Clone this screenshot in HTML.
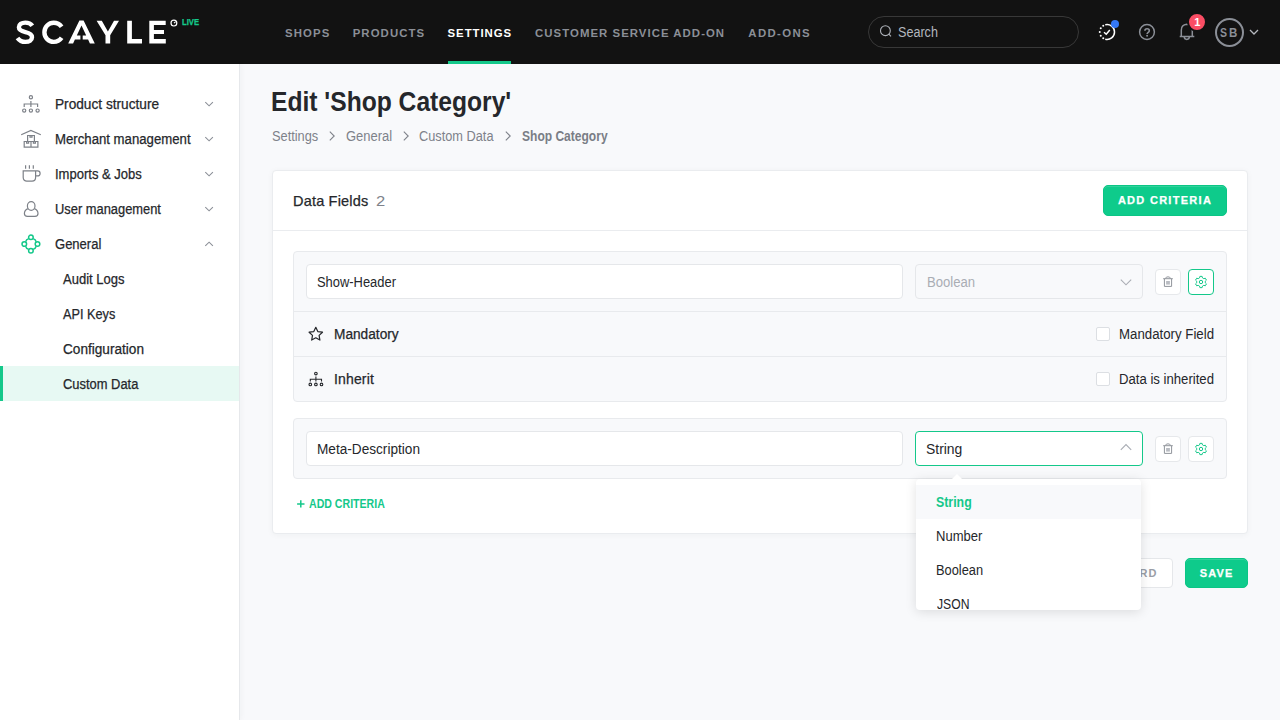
<!DOCTYPE html>
<html lang="en">
<head>
<meta charset="utf-8">
<title>Edit 'Shop Category'</title>
<style>
*{box-sizing:border-box;margin:0;padding:0}
html,body{width:1280px;height:720px;overflow:hidden}
body{font-family:"Liberation Sans",sans-serif;background:#f8f9fb;color:#25272b;position:relative}
.t{position:absolute;white-space:nowrap;z-index:5;transform-origin:0 0}
.t.m{-webkit-text-stroke:0.25px currentColor}
.t.z{z-index:30}
svg{position:absolute;overflow:visible}
#hdr{position:absolute;left:0;top:0;width:1280px;height:64px;background:#121212}
#navline{position:absolute;left:448px;top:61px;width:63px;height:3px;background:#14c88a}
#search{position:absolute;left:868px;top:16px;width:211px;height:32px;border:1px solid #383838;border-radius:16px}
#bdot{position:absolute;left:1111px;top:20px;width:8px;height:8px;border-radius:50%;background:#3478f6}
#badge{position:absolute;left:1187px;top:12px;width:20px;height:20px;border-radius:50%;background:#fa4d64;border:2px solid #121212}
#avatar{position:absolute;left:1215px;top:18px;width:29px;height:29px;border-radius:50%;border:2px solid #8b8f97}
#side{position:absolute;left:0;top:64px;width:240px;height:656px;background:#fff;border-right:1px solid #e6e8eb;box-shadow:1px 0 6px rgba(30,40,60,0.04)}
#act{position:absolute;left:0;top:366px;width:239px;height:35px;background:#e7f9f3;border-left:3px solid #14c88a}
#card{position:absolute;left:272px;top:170px;width:976px;height:364px;background:#fff;border:1px solid #eaecef;border-radius:4px;box-shadow:0 1px 6px rgba(30,40,60,0.04)}
#cardline{position:absolute;left:273px;top:230px;width:974px;height:1px;background:#eaecef}
.box{position:absolute;left:293px;width:934px;background:#f8f9fb;border:1px solid #e8eaed;border-radius:4px}
.hl{position:absolute;left:294px;width:932px;height:1px;background:#e8eaed}
.inp{position:absolute;background:#fff;border:1px solid #e5e7ea;border-radius:4px}
.ib{position:absolute;width:26px;height:26px;background:#fff;border:1px solid #e6e8eb;border-radius:4px}
.cb{position:absolute;left:1096px;width:14px;height:14px;background:#fff;border:1px solid #dcdfe3;border-radius:2px}
.btn{position:absolute;background:#0ecb8b;border:1px solid #0bc585;border-radius:5px;box-shadow:inset 0 1px 0 rgba(255,255,255,0.14)}
#dd{position:absolute;left:916px;top:479px;width:225px;height:131px;background:#fff;border-radius:4px;box-shadow:0 2px 12px rgba(0,0,0,0.12);z-index:20;overflow:hidden}
#ddsel{position:absolute;left:0;top:6px;width:225px;height:34px;background:#f8f9fb}
#ddarrow{position:absolute;left:951px;top:474px;width:0;height:0;border-left:6px solid transparent;border-right:6px solid transparent;border-bottom:6px solid #fff;z-index:21}
</style>
</head>
<body>
<div id="hdr"></div>
<!-- logo -->
<svg width="200" height="64" style="left:0;top:0" viewBox="0 0 200 64">
  <g fill="none" stroke="#fff" stroke-width="4.4">
    <path d="M32.3 25.8C30.7 23.5 28.2 22.6 25.3 22.6C21.6 22.6 18.9 24.4 18.9 27.3C18.9 30.3 21.5 31.2 25.4 32.1C29.4 33 32 34.1 32 37.2C32 40.1 29.2 41.9 25.5 41.9C22 41.9 19.3 40.5 17.5 37.9"/>
    <path d="M61.6 26.8C59.8 24.2 57 22.7 53.7 22.7C48.6 22.7 44.4 26.8 44.4 32.3C44.4 37.800000000000004 48.6 41.9 53.7 41.9C57 41.9 59.8 40.4 61.6 37.8"/>
  </g>
  <g fill="#fff">
    <path d="M68.2 43.5L79.4 20.6H83.6L94.8 43.5H89.9L88.1 39.6H82.7V35.5H86.2L81.5 25.600000000000001L76.8 35.5H80.4V39.6H74.9L73.1 43.5Z"/>
    <path d="M96.6 20.8H101.8L107.9 31.4L114 20.8H119L110.2 35.2V43.4H105.5V35.2Z"/>
    <path d="M127.2 20.8H131.9V39.1H142V43.4H127.2Z"/>
    <path d="M149.3 20.8H165.7V25H153.9V30.1H164V34H153.9V39.1H165.8V43.4H149.3Z"/>
  </g>
  <circle cx="173.9" cy="23.1" r="2.9" fill="none" stroke="#fff" stroke-width="1.2"/>
  <path d="M174 23.2L175.6 21.6" stroke="#fff" stroke-width="1.1" fill="none"/>
</svg>
<div id="navline"></div>
<div id="search"></div>
<svg width="14" height="14" style="left:879px;top:24px" viewBox="0 0 14 14"><circle cx="6.4" cy="6.7" r="4.9" fill="none" stroke="#aeb2b9" stroke-width="1.1"/><path d="M9.9 10.2L12 12.4" stroke="#aeb2b9" stroke-width="1.1" fill="none"/></svg>
<!-- progress icon -->
<svg width="24" height="24" style="left:1095px;top:20px" viewBox="0 0 24 24">
  <path d="M10.25 4.71A7.5 7.5 0 1 1 10.25 19.29" fill="none" stroke="#fff" stroke-width="1.5"/>
  <g fill="#fff"><circle cx="8.25" cy="5.75" r="1"/><circle cx="5.75" cy="8.25" r="1"/><circle cx="4.75" cy="12" r="1"/><circle cx="5.75" cy="15.7" r="1"/><circle cx="8.25" cy="18.3" r="1"/></g>
  <path d="M9 12.25L11.25 14.2L14.8 10" fill="none" stroke="#fff" stroke-width="1.5"/>
</svg>
<div id="bdot"></div>
<!-- help -->
<svg width="20" height="20" style="left:1137px;top:22px" viewBox="0 0 20 20"><circle cx="10" cy="10" r="7.4" fill="none" stroke="#8b8f97" stroke-width="1.5"/><path d="M7.9 8.7C7.9 7.5 8.9 6.8 10.1 6.8C11.4 6.8 12.3 7.6 12.3 8.7C12.3 10.3 10.1 10.3 10.1 12.1" fill="none" stroke="#8b8f97" stroke-width="1.6"/><circle cx="10.1" cy="13.8" r="0.95" fill="#8b8f97"/></svg>
<!-- bell -->
<svg width="20" height="20" style="left:1177px;top:22px" viewBox="0 0 20 20">
  <path d="M2.7 14.5H17.3M4.3 14.5V8.2C4.3 4.6 6.6 2.6 9.7 2.3C12.8 2.6 15.3 4.6 15.3 8.2V14.5" fill="none" stroke="#8b8f97" stroke-width="1.5"/>
  <path d="M7.2 14.6A2.6 2.8 0 0 0 12.4 14.6" fill="none" stroke="#8b8f97" stroke-width="1.5"/>
</svg>
<div id="badge"></div>
<div id="avatar"></div>
<svg width="10" height="8" style="left:1249px;top:28px" viewBox="0 0 10 8"><path d="M1 2L5 6L9 2" fill="none" stroke="#b5b8be" stroke-width="1.3"/></svg>

<div id="side"></div>
<div id="act"></div>
<!-- sidebar icons -->
<svg width="20" height="20" style="left:21px;top:94px" viewBox="0 0 20 20" fill="none" stroke="#7d8188" stroke-width="1.2">
  <circle cx="9.9" cy="3.3" r="1.6"/><path d="M9.9 7V12.9M3.2 12.9V10H16.6V12.9"/>
  <circle cx="3.2" cy="16.6" r="1.6"/><circle cx="9.9" cy="16.6" r="1.6"/><circle cx="16.6" cy="16.6" r="1.6"/>
</svg>
<svg width="22" height="20" style="left:20px;top:129px" viewBox="0 0 22 20" fill="none" stroke="#7d8188" stroke-width="1.2">
  <path d="M1.2 5.8L10.9 1.4L20.8 5.8"/>
  <path d="M7.6 6.5H14.4V12.5H7.6ZM4.2 12.5H17.9V18.2H4.2ZM11 12.5V18.2M10 6.5V8.2H12V6.5M6.6 12.5V14.2H8.6V12.5M13.4 12.5V14.2H15.4V12.5"/>
</svg>
<svg width="20" height="20" style="left:21px;top:163px" viewBox="0 0 20 20" fill="none" stroke="#7d8188" stroke-width="1.2">
  <path d="M4.6 2.2V5.8M8.4 2.2V5.8M12.3 2.2V5.8"/>
  <path d="M2.2 7.9H14.6V14.6C14.6 16.8 13 18.2 11 18.2H5.8C3.8 18.2 2.2 16.8 2.2 14.6ZM14.6 7.9H16.6C18 7.9 19.1 9 19.1 10.4C19.1 11.8 18 12.9 16.6 12.9H14.6"/>
</svg>
<svg width="20" height="24" style="left:21px;top:197px" viewBox="0 0 20 24" fill="none" stroke="#7d8188" stroke-width="1.2">
  <ellipse cx="10.2" cy="9" rx="3.8" ry="4.3"/>
  <path d="M6.9 11.6C4.6 12.5 3.4 14.3 3.4 16.5C3.4 18.3 4.6 19.3 6.4 19.3H14C15.8 19.3 17 18.3 17 16.5C17 14.3 15.8 12.5 13.5 11.6"/>
</svg>
<svg width="20" height="20" style="left:21px;top:234px" viewBox="0 0 20 20" fill="none" stroke="#14c88a" stroke-width="1.5">
  <circle cx="9.9" cy="3.3" r="2.3"/><circle cx="9.9" cy="16.7" r="2.3"/><circle cx="3.3" cy="10" r="2.3"/><circle cx="16.5" cy="10" r="2.3"/>
  <path d="M7.7 4.6A4.6 4.6 0 0 0 4.6 7.8M12.1 4.6A4.6 4.6 0 0 1 15.2 7.8M4.6 12.2A4.6 4.6 0 0 0 7.7 15.4M15.2 12.2A4.6 4.6 0 0 1 12.1 15.4"/>
</svg>
<!-- sidebar chevrons -->
<svg width="10" height="8" style="left:204px;top:100px" viewBox="0 0 10 8"><path d="M1.3 2.2L5.1 5.8L8.9 2.2" fill="none" stroke="#8b8f97" stroke-width="1.1"/></svg>
<svg width="10" height="8" style="left:204px;top:135px" viewBox="0 0 10 8"><path d="M1.3 2.2L5.1 5.8L8.9 2.2" fill="none" stroke="#8b8f97" stroke-width="1.1"/></svg>
<svg width="10" height="8" style="left:204px;top:170px" viewBox="0 0 10 8"><path d="M1.3 2.2L5.1 5.8L8.9 2.2" fill="none" stroke="#8b8f97" stroke-width="1.1"/></svg>
<svg width="10" height="8" style="left:204px;top:205px" viewBox="0 0 10 8"><path d="M1.3 2.2L5.1 5.8L8.9 2.2" fill="none" stroke="#8b8f97" stroke-width="1.1"/></svg>
<svg width="10" height="8" style="left:204px;top:240px" viewBox="0 0 10 8"><path d="M1.3 5.8L5.1 2.2L8.9 5.8" fill="none" stroke="#8b8f97" stroke-width="1.1"/></svg>

<!-- breadcrumb chevrons -->
<svg width="8" height="12" style="left:328px;top:130px" viewBox="0 0 8 12"><path d="M1.8 1.6L6.2 6L1.8 10.4" fill="none" stroke="#7e828a" stroke-width="1.1"/></svg>
<svg width="8" height="12" style="left:402px;top:130px" viewBox="0 0 8 12"><path d="M1.8 1.6L6.2 6L1.8 10.4" fill="none" stroke="#7e828a" stroke-width="1.1"/></svg>
<svg width="8" height="12" style="left:504px;top:130px" viewBox="0 0 8 12"><path d="M1.8 1.6L6.2 6L1.8 10.4" fill="none" stroke="#7e828a" stroke-width="1.1"/></svg>

<div id="card"></div>
<div id="cardline"></div>
<div class="btn" style="left:1103px;top:185px;width:124px;height:31px"></div>

<!-- box 1 -->
<div class="box" style="top:251px;height:151px"></div>
<div class="hl" style="top:311px"></div>
<div class="hl" style="top:356px"></div>
<div class="inp" style="left:306px;top:264px;width:597px;height:35px"></div>
<div class="inp" style="left:915px;top:264px;width:228px;height:35px;background:#f8f9fb"></div>
<svg width="14" height="10" style="left:1119px;top:277px" viewBox="0 0 14 10"><path d="M1.8 2.6L7 7.8L12.2 2.6" fill="none" stroke="#a9adb4" stroke-width="1.1"/></svg>
<div class="ib" style="left:1155px;top:269px"></div>
<div class="ib" style="left:1188px;top:269px;border-color:#14c88a"></div>
<div class="cb" style="top:327px"></div>
<div class="cb" style="top:372px"></div>
<!-- star -->
<svg width="18" height="18" style="left:307px;top:325px" viewBox="0 0 18 18"><path d="M8.8 2.3L10.8 6.6L15.5 7.2L12.1 10.4L12.9 15.1L8.8 12.8L4.7 15.1L5.5 10.4L2.1 7.2L6.8 6.6Z" fill="none" stroke="#25272b" stroke-width="1.2" stroke-linejoin="round"/></svg>
<!-- inherit icon -->
<svg width="18" height="18" style="left:307px;top:370px" viewBox="0 0 18 18" fill="none" stroke="#25272b" stroke-width="1.1">
  <circle cx="8.9" cy="3.6" r="1.3"/><path d="M8.9 6.4V11.6M3.3 11.6V9.2H14.5V11.6"/>
  <circle cx="3.3" cy="14.4" r="1.3"/><circle cx="8.9" cy="14.4" r="1.3"/><circle cx="14.5" cy="14.4" r="1.3"/>
</svg>

<!-- box 2 -->
<div class="box" style="top:418px;height:61px"></div>
<div class="inp" style="left:306px;top:431px;width:597px;height:35px"></div>
<div class="inp" style="left:915px;top:431px;width:228px;height:35px;border-color:#14c88a"></div>
<svg width="14" height="10" style="left:1119px;top:442px" viewBox="0 0 14 10"><path d="M1.8 7.8L7 2.6L12.2 7.8" fill="none" stroke="#a9adb4" stroke-width="1.1"/></svg>
<div class="ib" style="left:1155px;top:436px"></div>
<div class="ib" style="left:1188px;top:436px"></div>

<!-- trash + gear icons -->
<svg width="12" height="12" style="left:1162px;top:276px" viewBox="0 0 12 12" id="tr1"><g fill="none" stroke="#90949b" stroke-width="1"><path d="M1.2 2.7H10.8M3.6 2.5C3.6 1.4 4.6 0.9 6 0.9C7.4 0.9 8.4 1.4 8.4 2.5M2.4 2.9V10.4H9.6V2.9"/></g><rect x="4.1" y="5" width="3.8" height="3.6" fill="#b9bcc2"/></svg>
<svg width="12" height="12" style="left:1162px;top:443px" viewBox="0 0 12 12"><g fill="none" stroke="#90949b" stroke-width="1"><path d="M1.2 2.7H10.8M3.6 2.5C3.6 1.4 4.6 0.9 6 0.9C7.4 0.9 8.4 1.4 8.4 2.5M2.4 2.9V10.4H9.6V2.9"/></g><rect x="4.1" y="5" width="3.8" height="3.6" fill="#b9bcc2"/></svg>
<svg width="14" height="14" style="left:1194px;top:275px" viewBox="-7 -7 14 14" class="gear"><path d="M1.49 -4.09L1.10 -5.64L-1.10 -5.64L-1.49 -4.09L-2.80 -3.33L-4.34 -3.77L-5.44 -1.87L-4.28 -0.76L-4.28 0.76L-5.44 1.87L-4.34 3.77L-2.80 3.33L-1.49 4.09L-1.10 5.64L1.10 5.64L1.49 4.09L2.80 3.33L4.34 3.77L5.44 1.87L4.28 0.76L4.28 -0.76L5.44 -1.87L4.34 -3.77L2.80 -3.33Z" fill="none" stroke="#14c88a" stroke-width="1" stroke-linejoin="round"/><circle cx="0" cy="0" r="1.7" fill="none" stroke="#14c88a" stroke-width="1"/></svg>
<svg width="14" height="14" style="left:1194px;top:442px" viewBox="-7 -7 14 14" class="gear"><path d="M1.49 -4.09L1.10 -5.64L-1.10 -5.64L-1.49 -4.09L-2.80 -3.33L-4.34 -3.77L-5.44 -1.87L-4.28 -0.76L-4.28 0.76L-5.44 1.87L-4.34 3.77L-2.80 3.33L-1.49 4.09L-1.10 5.64L1.10 5.64L1.49 4.09L2.80 3.33L4.34 3.77L5.44 1.87L4.28 0.76L4.28 -0.76L5.44 -1.87L4.34 -3.77L2.80 -3.33Z" fill="none" stroke="#14c88a" stroke-width="1" stroke-linejoin="round"/><circle cx="0" cy="0" r="1.7" fill="none" stroke="#14c88a" stroke-width="1"/></svg>

<!-- + add criteria -->
<svg width="10" height="10" style="left:296px;top:499px" viewBox="0 0 10 10"><path d="M1.1 4.9H8.5M4.8 1.2V8.6" fill="none" stroke="#14c88a" stroke-width="1.5"/></svg>

<!-- footer buttons -->
<div class="inp" style="left:1086px;top:558px;width:87px;height:30px"></div>
<div class="btn" style="left:1185px;top:558px;width:63px;height:30px"></div>

<!-- dropdown -->
<div id="ddarrow"></div>
<div id="dd"><div id="ddsel"></div></div>

<div class="t" style="left:285.02px;top:26px;font-size:11.4px;line-height:14px;color:#8b8f97;font-weight:bold;letter-spacing:1.087px;">SHOPS</div>
<div class="t" style="left:352.64px;top:26px;font-size:11.4px;line-height:14px;color:#8b8f97;font-weight:bold;letter-spacing:1.090px;">PRODUCTS</div>
<div class="t" style="left:447.56px;top:26px;font-size:11.4px;line-height:14px;color:#ffffff;font-weight:bold;letter-spacing:0.943px;">SETTINGS</div>
<div class="t" style="left:535.09px;top:26px;font-size:11.4px;line-height:14px;color:#8b8f97;font-weight:bold;letter-spacing:1.035px;">CUSTOMER SERVICE ADD-ON</div>
<div class="t" style="left:748.30px;top:26px;font-size:11.4px;line-height:14px;color:#8b8f97;font-weight:bold;letter-spacing:1.372px;">ADD-ONS</div>
<div class="t" style="left:898.08px;top:24px;font-size:14px;line-height:17px;color:#b3b7be;transform:scaleX(0.8994);">Search</div>
<div class="t m" style="left:181.90px;top:18px;font-size:8.2px;line-height:10px;color:#14c88a;font-weight:bold;transform:scaleX(0.9340);">LIVE</div>
<div class="t" style="left:1194.20px;top:16px;font-size:11px;line-height:13px;color:#ffffff;font-weight:bold;">1</div>
<div class="t" style="left:1219.90px;top:25px;font-size:13px;line-height:16px;color:#8b8f97;font-weight:bold;transform:scaleX(0.8111);">S</div>
<div class="t" style="left:1229.20px;top:25px;font-size:13px;line-height:16px;color:#8b8f97;font-weight:bold;transform:scaleX(0.8889);">B</div>
<div class="t m" style="left:55.11px;top:96px;font-size:14px;line-height:17px;color:#25272b;transform:scaleX(0.9762);">Product structure</div>
<div class="t m" style="left:55.10px;top:131px;font-size:14px;line-height:17px;color:#25272b;transform:scaleX(0.9417);">Merchant management</div>
<div class="t m" style="left:54.51px;top:166px;font-size:14px;line-height:17px;color:#25272b;transform:scaleX(0.9304);">Imports &amp; Jobs</div>
<div class="t m" style="left:54.61px;top:201px;font-size:14px;line-height:17px;color:#25272b;transform:scaleX(0.9197);">User management</div>
<div class="t m" style="left:54.72px;top:236px;font-size:14px;line-height:17px;color:#25272b;transform:scaleX(0.9302);">General</div>
<div class="t m" style="left:63.48px;top:271px;font-size:14px;line-height:17px;color:#25272b;transform:scaleX(0.9294);">Audit Logs</div>
<div class="t m" style="left:63.44px;top:306px;font-size:14px;line-height:17px;color:#25272b;transform:scaleX(0.9084);">API Keys</div>
<div class="t m" style="left:62.89px;top:341px;font-size:14px;line-height:17px;color:#25272b;transform:scaleX(0.9729);">Configuration</div>
<div class="t m" style="left:63.14px;top:376px;font-size:14px;line-height:17px;color:#25272b;transform:scaleX(0.9227);">Custom Data</div>
<div class="t" style="left:270.93px;top:86px;font-size:27px;line-height:32px;color:#25272b;font-weight:bold;transform:scaleX(0.9121);">Edit &#x27;Shop Category&#x27;</div>
<div class="t" style="left:271.71px;top:128px;font-size:14px;line-height:17px;color:#7e828a;transform:scaleX(0.9141);">Settings</div>
<div class="t" style="left:345.66px;top:128px;font-size:14px;line-height:17px;color:#7e828a;transform:scaleX(0.9268);">General</div>
<div class="t" style="left:419.23px;top:128px;font-size:14px;line-height:17px;color:#7e828a;transform:scaleX(0.9122);">Custom Data</div>
<div class="t" style="left:522.36px;top:128px;font-size:14px;line-height:17px;color:#7a7e86;font-weight:bold;transform:scaleX(0.8597);">Shop Category</div>
<div class="t m" style="left:293.08px;top:193px;font-size:14.5px;line-height:17px;color:#25272b;letter-spacing:0.174px;">Data Fields</div>
<div class="t" style="left:376.44px;top:193px;font-size:14.5px;line-height:17px;color:#7e828a;transform:scaleX(1.1435);">2</div>
<div class="t m" style="left:1117.89px;top:194px;font-size:11px;line-height:13px;color:#ffffff;font-weight:bold;letter-spacing:1.284px;">ADD CRITERIA</div>
<div class="t" style="left:317.43px;top:274px;font-size:14px;line-height:17px;color:#25272b;transform:scaleX(0.9221);">Show-Header</div>
<div class="t" style="left:926.63px;top:274px;font-size:14px;line-height:17px;color:#a9adb4;transform:scaleX(0.9368);">Boolean</div>
<div class="t m" style="left:334.21px;top:326px;font-size:14px;line-height:17px;color:#25272b;transform:scaleX(0.9773);">Mandatory</div>
<div class="t" style="left:1119.38px;top:326px;font-size:14px;line-height:17px;color:#25272b;transform:scaleX(0.9466);">Mandatory Field</div>
<div class="t m" style="left:334.01px;top:371px;font-size:14px;line-height:17px;color:#25272b;letter-spacing:0.154px;">Inherit</div>
<div class="t" style="left:1119.34px;top:371px;font-size:14px;line-height:17px;color:#25272b;transform:scaleX(0.9389);">Data is inherited</div>
<div class="t" style="left:317.19px;top:441px;font-size:14px;line-height:17px;color:#25272b;transform:scaleX(0.9731);">Meta-Description</div>
<div class="t" style="left:925.82px;top:441px;font-size:14px;line-height:17px;color:#25272b;transform:scaleX(0.9931);">String</div>
<div class="t" style="left:309.11px;top:497px;font-size:12px;line-height:14px;color:#14c88a;font-weight:bold;transform:scaleX(0.8819);">ADD CRITERIA</div>
<div class="t z" style="left:935.91px;top:494px;font-size:14px;line-height:17px;color:#14c88a;font-weight:bold;transform:scaleX(0.8826);">String</div>
<div class="t z" style="left:936.04px;top:528px;font-size:14px;line-height:17px;color:#25272b;transform:scaleX(0.9293);">Number</div>
<div class="t z" style="left:935.87px;top:562px;font-size:14px;line-height:17px;color:#25272b;transform:scaleX(0.9166);">Boolean</div>
<div class="t z" style="left:936.53px;top:596px;font-size:14px;line-height:17px;color:#25272b;transform:scaleX(0.8691);">JSON</div>
<div class="t m" style="left:1199.85px;top:567px;font-size:11px;line-height:13px;color:#ffffff;font-weight:bold;letter-spacing:1.081px;">SAVE</div>
<div class="t" style="left:1101.00px;top:567px;font-size:11px;line-height:13px;color:#9a9ea6;font-weight:bold;letter-spacing:0.872px;">DISCARD</div>
</body>
</html>
